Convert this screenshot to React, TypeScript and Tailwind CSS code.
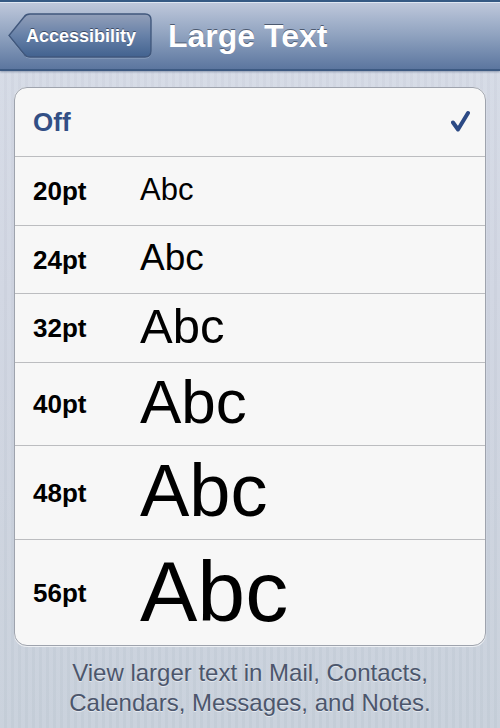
import { useState } from "react";

type Option = { label: string; row: string; sample?: string };

const options: Option[] = [
  { label: "Off", row: "h-17" },
  { label: "20pt", row: "h-17", sample: "text-[31px]" },
  { label: "24pt", row: "h-[67px]", sample: "text-[37px]" },
  { label: "32pt", row: "h-17", sample: "text-[49px]" },
  { label: "40pt", row: "h-[82px]", sample: "text-[62px]" },
  { label: "48pt", row: "h-[93px]", sample: "text-[74px]" },
  { label: "56pt", row: "h-[105px]", sample: "text-[86px]" },
];

function Header() {
  return (
    <header className="flex h-[71px] items-center border-t-2 border-b-2 border-t-[#365a84] border-b-[#3d5a82] bg-linear-to-b from-[#c0c9dc] via-[#8fa2bf] to-[#5c769f] px-2 shadow-[inset_0_1px_0_#dfe7f2,0_1px_2px_#8f9bb0]">
      <button type="button" className="relative flex h-[46px] w-36 items-center pl-[18px] text-left">
        <svg className="absolute inset-0 h-full w-full overflow-visible" viewBox="0 0 144 46" aria-hidden="true">
          <defs>
            <linearGradient id="back" x1="0" y1="0" x2="0" y2="1">
              <stop offset="0" stopColor="#929fb9" />
              <stop offset="0.5" stopColor="#6781a8" />
              <stop offset="1" stopColor="#42628f" />
            </linearGradient>
          </defs>
          <path d="M22 2H137Q143 2 143 8V39Q143 45 137 45H22Q18 45 16 42L1 23.500L16 5Q18 2 22 2Z" fill="none" stroke="#a7b8d0" strokeOpacity="0.7" />
          <path d="M22 1H137Q143 1 143 7V38Q143 44 137 44H22Q18 44 16 41L1 22.500L16 4Q18 1 22 1Z" fill="url(#back)" stroke="#40577c" strokeWidth="1.400" />
        </svg>
        <span className="relative text-[18px] leading-none font-bold text-white [text-shadow:0_-1px_0_#3e4d66]">Accessibility</span>
      </button>
      <h1 className="ml-4 text-[32px] leading-9 font-bold text-white [text-shadow:0_-1px_0_#4d5a70]">Large Text</h1>
    </header>
  );
}

export default function App() {
  const [selected, setSelected] = useState("Off");
  return (
    <div className="min-h-screen bg-[repeating-linear-gradient(90deg,#ffffff12_0px,#ffffff12_4px,#00000003_4px,#00000003_7px),linear-gradient(#d5dbe6,#cfd4e1_40%,#c6cfda)] font-['Liberation_Sans',Arial,sans-serif]">
      <Header />
      <main className="px-3.5 pt-4">
        <fieldset aria-label="Large Text" className="divide-y divide-[#bcbdc0] overflow-hidden rounded-[13px] border border-[#9ea3ad] bg-[#f7f7f7] shadow-[0_1px_0_#eef1f5]">
          {options.map((option) => (
            <label key={option.label} className="block">
              <span className={`${option.row} box-content flex items-center px-[18px]`}>
                <span className={`w-[107px] shrink-0 text-[26px] leading-none font-bold ${option.sample ? "text-black" : "text-[#324f85]"}`}>{option.label}</span>
                {option.sample && <span className={`${option.sample} pb-1 leading-none text-black`}>Abc</span>}
                <input
                  type="radio"
                  name="text-size"
                  checked={selected === option.label}
                  onChange={() => setSelected(option.label)}
                  className="peer ml-auto size-0 appearance-none"
                />
                <svg className="invisible -mr-1 h-6 w-5 shrink-0 peer-checked:visible" viewBox="0 0 20 24" fill="none" aria-hidden="true">
                  <path d="M2 12.500L7 19.500L17 3" stroke="#2c4a85" strokeWidth="4" strokeLinecap="round" strokeLinejoin="round" />
                </svg>
              </span>
            </label>
          ))}
        </fieldset>
        <p className="mx-auto mt-3 max-w-[380px] text-center text-[24px] leading-[30px] text-[#4c566c] [text-shadow:0_1px_0_#e4e9f0]">
          View larger text in Mail, Contacts, Calendars, Messages, and Notes.
        </p>
      </main>
    </div>
  );
}
